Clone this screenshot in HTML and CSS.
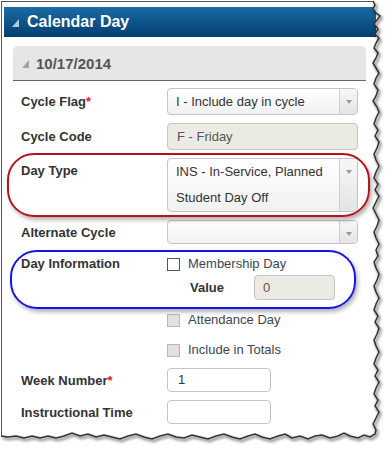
FILE: index.html
```html
<!DOCTYPE html>
<html>
<head>
    <title>Calendar Day</title>
    <meta charset="UTF-8">
    <link rel="stylesheet" href="styles.css">
</head>
<body>
    <div class="sheet">
        <div class="frame">
            <div class="header">
                <span class="tri tri-light"></span>
                <span class="title">Calendar Day</span>
            </div>
            <div class="content">
                <div class="panel-head">
                    <span class="tri tri-grey"></span>
                    <span class="date">10/17/2014</span>
                </div>

                <div class="form">
                    <div class="row r-flag">
                        <label class="label">Cycle Flag<span class="req">*</span></label>
                        <div class="select">
                            <span class="select-text">I - Include day in cycle</span>
                            <span class="arrow"></span>
                        </div>
                    </div>

                    <div class="row r-code">
                        <label class="label">Cycle Code</label>
                        <div class="input disabled wide">F - Friday</div>
                    </div>

                    <div class="row r-type">
                        <label class="label">Day Type</label>
                        <div class="select tall">
                            <span class="select-text">INS - In-Service, Planned<br>Student Day Off</span>
                            <span class="arrow"></span>
                        </div>
                    </div>

                    <div class="row r-alt">
                        <label class="label">Alternate Cycle</label>
                        <div class="select short">
                            <span class="select-text"></span>
                            <span class="arrow"></span>
                        </div>
                    </div>

                    <div class="row r-info">
                        <label class="label">Day Information</label>
                        <div class="check">
                            <span class="box"></span>
                            <span>Membership Day</span>
                        </div>
                    </div>
                    <div class="row r-value">
                        <span class="label"></span>
                        <div class="value">
                            <span class="value-label">Value</span>
                            <div class="input disabled small">0</div>
                        </div>
                    </div>

                    <div class="row r-att">
                        <span class="label"></span>
                        <div class="check">
                            <span class="box off"></span>
                            <span>Attendance Day</span>
                        </div>
                    </div>

                    <div class="row r-tot">
                        <span class="label"></span>
                        <div class="check">
                            <span class="box off"></span>
                            <span>Include in Totals</span>
                        </div>
                    </div>

                    <div class="row r-week">
                        <label class="label">Week Number<span class="req">*</span></label>
                        <div class="input mid">1</div>
                    </div>

                    <div class="row r-time">
                        <label class="label">Instructional Time</label>
                        <div class="input mid"></div>
                    </div>
                </div>
            </div>
        </div>

        <!-- callout marks -->
        <div class="mark mark-red"></div>
        <div class="mark mark-blue"></div>

        <!-- torn paper edge -->
        <svg class="torn" width="386" height="450" viewBox="0 0 386 450">
            <defs>
                <filter id="shade" x="-10%" y="-10%" width="130%" height="130%">
                    <feDropShadow dx="1.5" dy="2" stdDeviation="1.4" flood-color="#000" flood-opacity="0.75"/>
                </filter>
            </defs>
            <path fill="#fff" d="M386,0 L373,0 L373,1 L375,5 L373,9 L376,13 L380,16 L377,20 L374,24 L378,29 L375,34 L379,38 L376,43 L374,48 L378,53 L376,58 L373,63 L376,68 L379,73 L376,78 L374,84 L378,90 L376,96 L373,101 L377,107 L379,112 L376,118 L374,124 L378,130 L375,136 L379,142 L377,148 L374,154 L376,160 L379,166 L376,172 L374,178 L378,184 L375,190 L379,196 L376,202 L373,208 L376,214 L379,220 L377,226 L374,232 L376,238 L379,244 L376,250 L378,256 L374,262 L376,268 L379,274 L377,280 L374,286 L376,292 L379,298 L376,304 L374,310 L378,316 L375,322 L379,328 L377,334 L374,340 L376,346 L379,352 L376,358 L374,364 L378,370 L375,376 L379,382 L376,388 L374,394 L378,400 L375,406 L379,412 L376,418 L373,424 L376,430 L375,434 L370,437 L364,435 L358,438 L350,436 L344,433 L338,436 L330,438 L322,435 L315,436 L308,439 L300,436 L292,438 L285,434 L278,436 L270,439 L262,437 L255,434 L248,436 L240,439 L232,437 L224,434 L216,436 L208,439 L200,437 L192,435 L184,438 L176,437 L168,434 L160,436 L152,439 L144,437 L136,434 L128,436 L120,439 L112,437 L104,435 L96,437 L88,434 L80,436 L72,433 L64,436 L56,438 L48,436 L40,438 L32,436 L24,438 L16,436 L8,437 L0,436 L0,450 L386,450 Z"/>
            <polyline fill="none" stroke="#333" stroke-width="1.5" filter="url(#shade)" points="373,1 375,5 373,9 376,13 380,16 377,20 374,24 378,29 375,34 379,38 376,43 374,48 378,53 376,58 373,63 376,68 379,73 376,78 374,84 378,90 376,96 373,101 377,107 379,112 376,118 374,124 378,130 375,136 379,142 377,148 374,154 376,160 379,166 376,172 374,178 378,184 375,190 379,196 376,202 373,208 376,214 379,220 377,226 374,232 376,238 379,244 376,250 378,256 374,262 376,268 379,274 377,280 374,286 376,292 379,298 376,304 374,310 378,316 375,322 379,328 377,334 374,340 376,346 379,352 376,358 374,364 378,370 375,376 379,382 376,388 374,394 378,400 375,406 379,412 376,418 373,424 376,430 375,434 370,437 364,435 358,438 350,436 344,433 338,436 330,438 322,435 315,436 308,439 300,436 292,438 285,434 278,436 270,439 262,437 255,434 248,436 240,439 232,437 224,434 216,436 208,439 200,437 192,435 184,438 176,437 168,434 160,436 152,439 144,437 136,434 128,436 120,439 112,437 104,435 96,437 88,434 80,436 72,433 64,436 56,438 48,436 40,438 32,436 24,438 16,436 8,437 1,436"/>
        </svg>
    </div>
</body>
</html>
```

FILE: styles.css
```css
:root {
    --text: #333333;
    --muted: #555555;
    --line: #c4c4c4;
    --disabled: #ebebe4;
}

body {
    margin: 0;
    background: #ffffff;
    font-family: 'Liberation Sans', Arial, sans-serif;
    color: var(--text);
}

.sheet {
    position: relative;
    width: 386px;
    height: 450px;
    overflow: hidden;
}

.frame {
    margin: 1px 0 0 1px;
    border-left: 1px solid #555;
    border-top: 1px solid #555;
    height: 448px;
    padding: 5px 0 0 2px;
}

/* header bar */
.header {
    width: 372px;
    height: 30px;
    display: flex;
    align-items: center;
    padding-left: 8px;
    box-sizing: border-box;
    background: linear-gradient(#1a6ca4, #023d70);
}

.tri {
    width: 0;
    height: 0;
    border-left: 7px solid transparent;
    margin-right: 8px;
    margin-top: 2px;
}

.tri-light {
    border-bottom: 8px solid #b9c6d2;
}

.tri-grey {
    border-bottom: 8px solid #a3a3a3;
    margin-right: 7px;
}

.title {
    color: #ffffff;
    font-weight: bold;
    font-size: 16px;
}

.content {
    padding: 9px 7px 0 9px;
}

.panel-head {
    width: 353px;
    height: 35px;
    display: flex;
    align-items: center;
    padding-left: 9px;
    box-sizing: border-box;
    background: #e6e6e6;
    border-radius: 5px 5px 0 0;
    border-bottom: 1px solid #666;
}

.date {
    font-weight: bold;
    font-size: 15px;
    color: var(--muted);
}

/* form rows */
.form {
    padding-left: 8px;
}

.row {
    display: flex;
    align-items: center;
    font-size: 13px;
}

.label {
    width: 146px;
    flex: none;
    font-weight: bold;
    color: var(--text);
}

.req {
    color: #e8121d;
}

.r-flag { margin-top: 7px; }
.r-code { margin-top: 8px; }
.r-type { margin-top: 8px; align-items: flex-start; }
.r-type .label { line-height: 26px; }
.r-alt { margin-top: 8px; }
.r-info { margin-top: 12px; line-height: 16px; }
.r-value { margin-top: 3px; }
.r-att { margin-top: 12px; line-height: 16px; }
.r-tot { margin-top: 14px; line-height: 16px; }
.r-week { margin-top: 10px; }
.r-time { margin-top: 8px; }

.select {
    width: 191px;
    height: 27px;
    display: flex;
    box-sizing: border-box;
    border: 1px solid var(--line);
    border-radius: 4px;
    background: linear-gradient(#ffffff, #f1f1f1);
    overflow: hidden;
}

.select.tall {
    height: 54px;
}

.select.short {
    height: 24px;
}

.select-text {
    flex: 1;
    padding-left: 8px;
    line-height: 25px;
    color: var(--text);
}

.tall .select-text {
    line-height: 26px;
}

.arrow {
    width: 17px;
    flex: none;
    border-left: 1px solid #cfcfcf;
    background: linear-gradient(#f7f7f7, #e4e4e4);
    position: relative;
}

.arrow::after {
    content: "";
    position: absolute;
    left: 6px;
    top: 11px;
    border-left: 3px solid transparent;
    border-right: 3px solid transparent;
    border-top: 4px solid #9a9a9a;
}

.input {
    height: 27px;
    line-height: 25px;
    box-sizing: border-box;
    border: 1px solid var(--line);
    border-radius: 4px;
    background: #ffffff;
    padding-left: 10px;
    color: var(--text);
}

.input.disabled {
    background: var(--disabled);
    color: var(--muted);
}

.input.wide {
    width: 191px;
    padding-left: 9px;
}

.input.small {
    width: 81px;
    height: 25px;
    line-height: 23px;
    padding-left: 8px;
}

.input.mid {
    width: 104px;
    height: 24px;
    line-height: 22px;
}

.check {
    display: flex;
    align-items: center;
    gap: 8px;
    color: #3b4654;
}

.box {
    width: 13px;
    height: 13px;
    box-sizing: border-box;
    border: 1px solid #555;
    background: #fff;
}

.box.off {
    border-color: #b8b8b8;
    background: #e1e1e1;
}

.value {
    display: flex;
    align-items: center;
    padding-left: 23px;
}

.value-label {
    width: 64px;
    font-weight: bold;
}

/* callout marks drawn over the form */
.mark {
    position: absolute;
    box-sizing: border-box;
    border-radius: 27px;
    box-shadow: 2px 3px 4px rgba(0, 0, 0, 0.3);
}

.mark-red {
    left: 7px;
    top: 153px;
    width: 363px;
    height: 64px;
    border: 2px solid #b5121b;
}

.mark-blue {
    left: 10px;
    top: 250px;
    width: 346px;
    height: 59px;
    border: 2px solid #1515e6;
}

.torn {
    position: absolute;
    left: 0;
    top: 0;
    pointer-events: none;
}
```
